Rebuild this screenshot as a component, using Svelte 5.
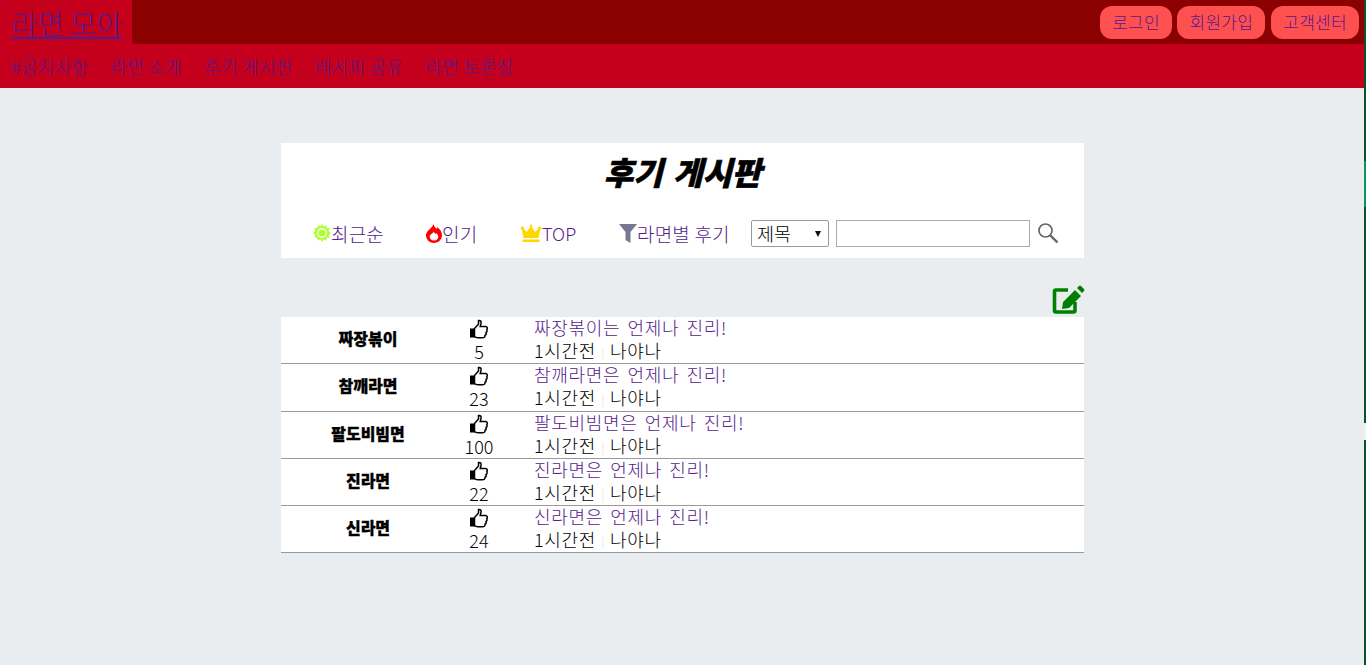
<script>
  const rows = [
    { name: '짜장볶이', likes: 5 },
    { name: '참깨라면', likes: 23 },
    { name: '팔도비빔면', likes: 100 },
    { name: '진라면', likes: 22 },
    { name: '신라면', likes: 24 }
  ];
  const nav = ['#공지사항', '라면 소개', '후기 게시판', '레시피 공유', '라면 토론장'];
  const auth = ['로그인', '회원가입', '고객센터'];
</script>

<div class="page">
  <header class="top">
    <div class="logo"><a href="#home">라면 모아</a></div>
    <div class="auth">
      {#each auth as a}
        <a class="pill" href="#a">{a}</a>
      {/each}
    </div>
  </header>
  <nav class="nav">
    {#each nav as n}
      <a href="#n">{n}</a>
    {/each}
  </nav>

  <main class="board">
    <section class="panel">
      <h1>후기 게시판</h1>
      <div class="tools">
        <a class="tool t1" href="#r">
          <svg width="18" height="18" viewBox="0 0 18 18">
            <path fill="#adff2f" d="M9 0l1.700 2.600 2.700-1.400.3 3 3-.1-1 2.900 2.300 1.900-2.300 2 1 2.800-3-.1-.3 3-2.700-1.400L9 18l-1.700-2.800-2.700 1.400-.3-3-3 .1 1-2.800L0 8.900l2.300-1.900-1-2.900 3 .1.300-3 2.700 1.400z"/>
            <circle cx="9" cy="9" r="5" fill="#fff"/>
            <circle cx="9" cy="9" r="3.600" fill="#adff2f"/>
          </svg>최근순</a>
        <a class="tool t2" href="#p">
          <svg width="16" height="19" viewBox="0 0 16 19">
            <path fill="#f00" d="M7.500 0c.6 2.600 2 3.600 3.300 5 .3-.7.400-1.300.4-2C13.800 5 16 7.900 16 11.300 16 15.600 12.500 19 8 19s-8-3.400-8-7.700C0 7 5.800 4.800 7.500 0z"/>
            <path fill="#fff" d="M7.800 7.500c.4 1.400 1.200 1.800 1.900 2.500.2-.3.300-.6.300-1 1.300 1 2.300 2.300 2.300 3.700 0 2.300-1.900 3.800-4.300 3.800s-4.300-1.500-4.300-3.800c0-2.300 3.200-3 4.100-5.200z"/>
          </svg>인기</a>
        <a class="tool t3" href="#t">
          <svg width="22" height="18" viewBox="0 0 22 18">
            <path fill="#ffd700" d="M11 0l1.500 2.300L11.900 3l3.100 5 3.200-3-.7-.8L19.500 2 22 4.500l-1.600.6L18.500 14h-15L1.600 5.100 0 4.500 2.500 2l2 2.200-.7.800L7 8l3.100-5-.6-.7z"/>
            <rect x="2.500" y="15.500" width="17" height="2.500" fill="#ffd700"/>
          </svg><span class="latin">TOP</span></a>
        <a class="tool t4" href="#f">
          <svg width="18" height="19" viewBox="0 0 18 19">
            <path fill="#77778f" d="M0 0h18l-6.500 8v11l-5-3V8z"/>
          </svg>라면별 후기</a>
        <span class="sel">제목<i></i></span>
        <input class="search" type="text" aria-label="검색" />
        <svg class="mag" width="22" height="22" viewBox="0 0 22 22">
          <circle cx="8.500" cy="8.500" r="6.500" fill="none" stroke="#666" stroke-width="1.700"/>
          <path d="M13.300 13.300L20.500 20.500" stroke="#666" stroke-width="2.400"/>
        </svg>
      </div>
    </section>

    <div class="write">
      <svg width="34" height="30" viewBox="0 0 34 30">
        <path fill="none" stroke="#008000" stroke-width="3.600" d="M17 5H5a1.500 1.500 0 0 0-1.500 1.500v19A1.500 1.500 0 0 0 5 27h17.500a1.500 1.500 0 0 0 1.500-1.500V17"/>
        <path fill="#008000" d="M24 5l6 6-12 12-7 1 1-7zM26 3l2-2q1-1 2 0l3 3q1 1 0 2l-2 2z"/>
      </svg>
    </div>

    <div class="list">
      {#each rows as r}
        <div class="row">
          <div class="name">{r.name}</div>
          <div class="likes">
            <svg width="20" height="20" viewBox="0 0 20 20">
              <path fill="none" stroke="#000" stroke-width="1.500" d="M5.500 9.500L9.500 5V1.500C11.500 1 12.500 2.500 12 4.500L11.200 7.500H16.500C18.500 7.500 18.800 9.500 17.800 10.500 18.500 11.800 18 13 17 13.500 17.500 15 16.800 16 16 16.300 16.200 18 15 18.800 13.500 18.800H9C7.500 18.800 6.500 18 5.500 17.500Z"/>
              <rect x="1" y="9.500" width="5" height="9" fill="#000"/>
            </svg>
            <span>{r.likes}</span>
          </div>
          <div class="body">
            <a href="#v">{r.name}{r.name.endsWith('이') || r.name.endsWith('라') ? '는' : '은'} 언제나 진리!</a>
            <div class="meta">1시간전<em>|</em>나야나</div>
          </div>
        </div>
      {/each}
    </div>
  </main>

  <div class="edge">
    <div class="bright"></div>
    <div class="gap"></div>
  </div>
</div>

<style>
  :global(body) {
    margin: 0;
    background: #e9edf0;
    font-family: "Noto Sans CJK KR", "Noto Sans", sans-serif;
    font-weight: 300;
    color: #000;
  }
  a { color: #551a8b; }
  .page { position: relative; height: 665px; overflow: hidden; }

  .top {
    height: 44px;
    background: #8b0000;
    display: flex;
    justify-content: space-between;
    padding-right: 5px;
    width: 1364px;
    box-sizing: border-box;
  }
  .logo {
    width: 132px;
    background: #c4001d;
    box-sizing: border-box;
    padding-left: 12px;
    font-size: 28px;
    letter-spacing: 0.3px;
    line-height: 46px;
  }
  .auth { display: flex; gap: 5px; padding-top: 6px; }
  .pill {
    height: 33px;
    line-height: 32px;
    padding: 0 12px;
    border-radius: 12px;
    background: #ff5050;
    font-size: 17px;
    letter-spacing: 0.3px;
    text-decoration: none;
  }
  .pill:first-child { padding: 0 12.500px; }
  .pill:nth-child(2) { margin-right: 1px; }

  .nav {
    height: 44px;
    width: 1364px;
    background: #c4001d;
    display: flex;
    gap: 22px;
    padding-left: 11px;
    box-sizing: border-box;
    line-height: 44px;
    font-size: 18px;
    letter-spacing: 0.3px;
  }
  .nav a { text-decoration: none; }

  .board { width: 803px; margin: 55px 0 0 281px; }
  .panel { background: #fff; height: 115px; overflow: hidden; }
  h1 {
    margin: 0;
    height: 57px;
    line-height: 57px;
    text-align: center;
    font-size: 32px;
    font-weight: 900;
    font-style: italic;
    word-spacing: 3px;
    -webkit-text-stroke: 0.6px #000;
  }
  .tools {
    display: flex;
    align-items: center;
    height: 34px;
    margin-top: 16px;
    padding-left: 32px;
    font-size: 19px;
    letter-spacing: 0.2px;
  }
  .tool {
    display: flex;
    align-items: center;
    text-decoration: none;
  }
  .latin { font-size: 18px; letter-spacing: 0; }
  .t1 { width: 113px; }
  .t2 { width: 94px; }
  .t3 { width: 99px; }
  .t4 { width: 132px; }
  .sel {
    box-sizing: border-box;
    position: relative;
    width: 78px;
    height: 27px;
    line-height: 24px;
    border: 1px solid #999;
    border-radius: 2px;
    padding-left: 5px;
    font-size: 18.500px;
    letter-spacing: 0;
  }
  .sel i {
    position: absolute;
    right: 7px;
    top: 10px;
    border-left: 3.500px solid transparent;
    border-right: 3.500px solid transparent;
    border-top: 6px solid #111;
  }
  .search {
    box-sizing: border-box;
    width: 194px;
    height: 27px;
    margin: 0 7px 0 7px;
    padding: 0;
    border: 1px solid #aaa;
    background: #fff;
  }
  .mag { display: block; }

  .write {
    height: 59px;
    display: flex;
    justify-content: flex-end;
    align-items: flex-end;
  }
  .write svg { display: block; margin-bottom: 2px; margin-right: -1px; }

  .row {
    box-sizing: border-box;
    height: 47.250px;
    background: #fff;
    border-bottom: 1px solid #999;
    display: grid;
    grid-template-columns: 174px 48px 1fr;
  }
  .name {
    text-align: center;
    font-size: 16px;
    font-weight: 900;
    line-height: 43px;
    -webkit-text-stroke: 0.3px #000;
  }
  .likes {
    text-align: center;
    font-size: 18px;
    line-height: 22px;
    padding-top: 2px;
    width: 48px;
  }
  .likes svg { display: block; margin: 0 auto 1px; width: 20px; height: 20px; }
  .likes span { display: block; }
  .body {
    margin-top: -1px;
    padding-left: 31px;
    font-size: 18px;
    letter-spacing: 0.7px;
    word-spacing: 2.500px;
    line-height: 23px;
  }
  .body a { text-decoration: none; display: block; }
  .meta em {
    font-style: normal;
    color: #ddd;
    font-size: 12px;
    margin: 0 5px;
    vertical-align: 1px;
  }

  .edge {
    position: absolute;
    top: 0;
    right: 0;
    width: 2px;
    height: 665px;
    background: #04552f;
  }
  .bright {
    position: absolute;
    top: 161px;
    width: 2px;
    height: 46px;
    background: #069a5a;
  }
  .gap {
    position: absolute;
    top: 423px;
    width: 2px;
    height: 17px;
    background: #eef0f2;
  }
</style>
